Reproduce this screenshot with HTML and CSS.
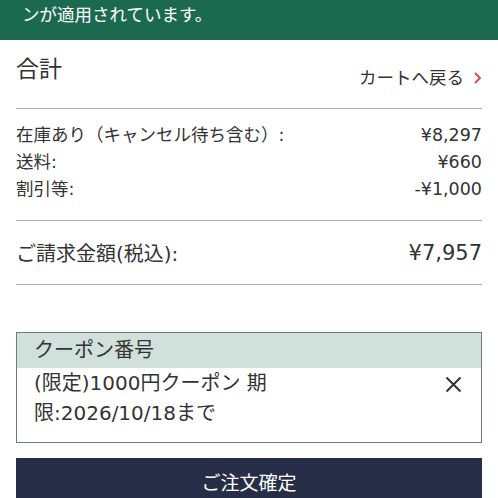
FILE: index.html
```html
<!DOCTYPE html>
<html lang="ja">
<head>
  <meta charset="UTF-8" />
  <meta name="viewport" content="width=device-width, initial-scale=1.0"/>
  <title>合計</title>
  <link rel="stylesheet" href="styles.css">
</head>
<body>

  <div class="notice">ンが適用されています。</div>

  <section class="summary">
    <div class="summary-head">
      <h2>合計</h2>
      <a class="back" href="#">カートへ戻る<span class="chev">
        <svg width="9" height="14" viewBox="0 0 9 14"><path d="M2 2l5 5-5 5" fill="none" stroke="#c9574f" stroke-width="2"/></svg>
      </span></a>
    </div>

    <div class="rows">
      <div class="row"><span>在庫あり（キャンセル待ち含む）:</span><span>¥8,297</span></div>
      <div class="row"><span>送料:</span><span>¥660</span></div>
      <div class="row"><span>割引等:</span><span>-¥1,000</span></div>
    </div>

    <div class="total">
      <span>ご請求金額(税込):</span><span>¥7,957</span>
    </div>

    <div class="coupon">
      <div class="coupon-head">クーポン番号</div>
      <div class="coupon-body">
        <p>(限定)1000円クーポン 期限:2026/10/18まで</p>
        <svg class="close" width="17" height="17" viewBox="0 0 17 17"><path d="M1.5 1.5l14 14M15.5 1.5l-14 14" stroke="#333" stroke-width="2"/></svg>
      </div>
    </div>

    <button class="confirm">ご注文確定</button>
  </section>

</body>
</html>
```

FILE: styles.css
```css
body {
  margin: 0;
  font-family: "DejaVu Sans", "Noto Sans CJK JP", sans-serif;
  background: #fff;
  color: #333;
  overflow: hidden;
}

.notice {
  background: #1b6a4f;
  color: #fff;
  font-size: 17.5px;
  height: 40px;
  line-height: 30px;
  padding: 0 22px;
  box-sizing: border-box;
}

.summary {
  padding: 0 16px;
}

.summary-head {
  display: flex;
  justify-content: space-between;
  align-items: flex-end;
  height: 68px;
  border-bottom: 1px solid #aaa;
}

.summary-head h2 {
  margin: 0 0 25px 0;
  font-size: 23px;
  font-weight: 400;
  line-height: 28px;
}

.back {
  color: #333;
  text-decoration: none;
  font-size: 17.5px;
  line-height: 20px;
  margin-bottom: 20px;
  display: flex;
  align-items: center;
}

.chev {
  margin-left: 9px;
  display: flex;
}

.rows {
  padding: 13px 0 17px;
  border-bottom: 1px solid #aaa;
}

.row {
  display: flex;
  justify-content: space-between;
  font-size: 17.5px;
  line-height: 27px;
}

.total {
  display: flex;
  justify-content: space-between;
  align-items: center;
  height: 63px;
  font-size: 20px;
  border-bottom: 1px solid #aaa;
}

.total span:last-child {
  font-size: 21px;
}

.coupon {
  margin-top: 47px;
  border: 1.5px solid #6f7d75;
  height: 111px;
  box-sizing: border-box;
}

.coupon-head {
  background: #cfe1da;
  font-size: 20px;
  line-height: 35px;
  padding: 0 17px;
}

.coupon-body {
  display: flex;
  justify-content: space-between;
  align-items: flex-start;
  padding: 0 19px 0 17px;
}

.coupon-body p {
  margin: 0;
  font-size: 20px;
  line-height: 30px;
  width: 250px;
}

.close {
  margin-top: 8px;
}

.confirm {
  display: block;
  width: 100%;
  margin-top: 15px;
  height: 50px;
  border: none;
  background: #252e46;
  color: #fff;
  font-family: inherit;
  font-size: 19px;
  padding: 0 0 4px;
}
```
